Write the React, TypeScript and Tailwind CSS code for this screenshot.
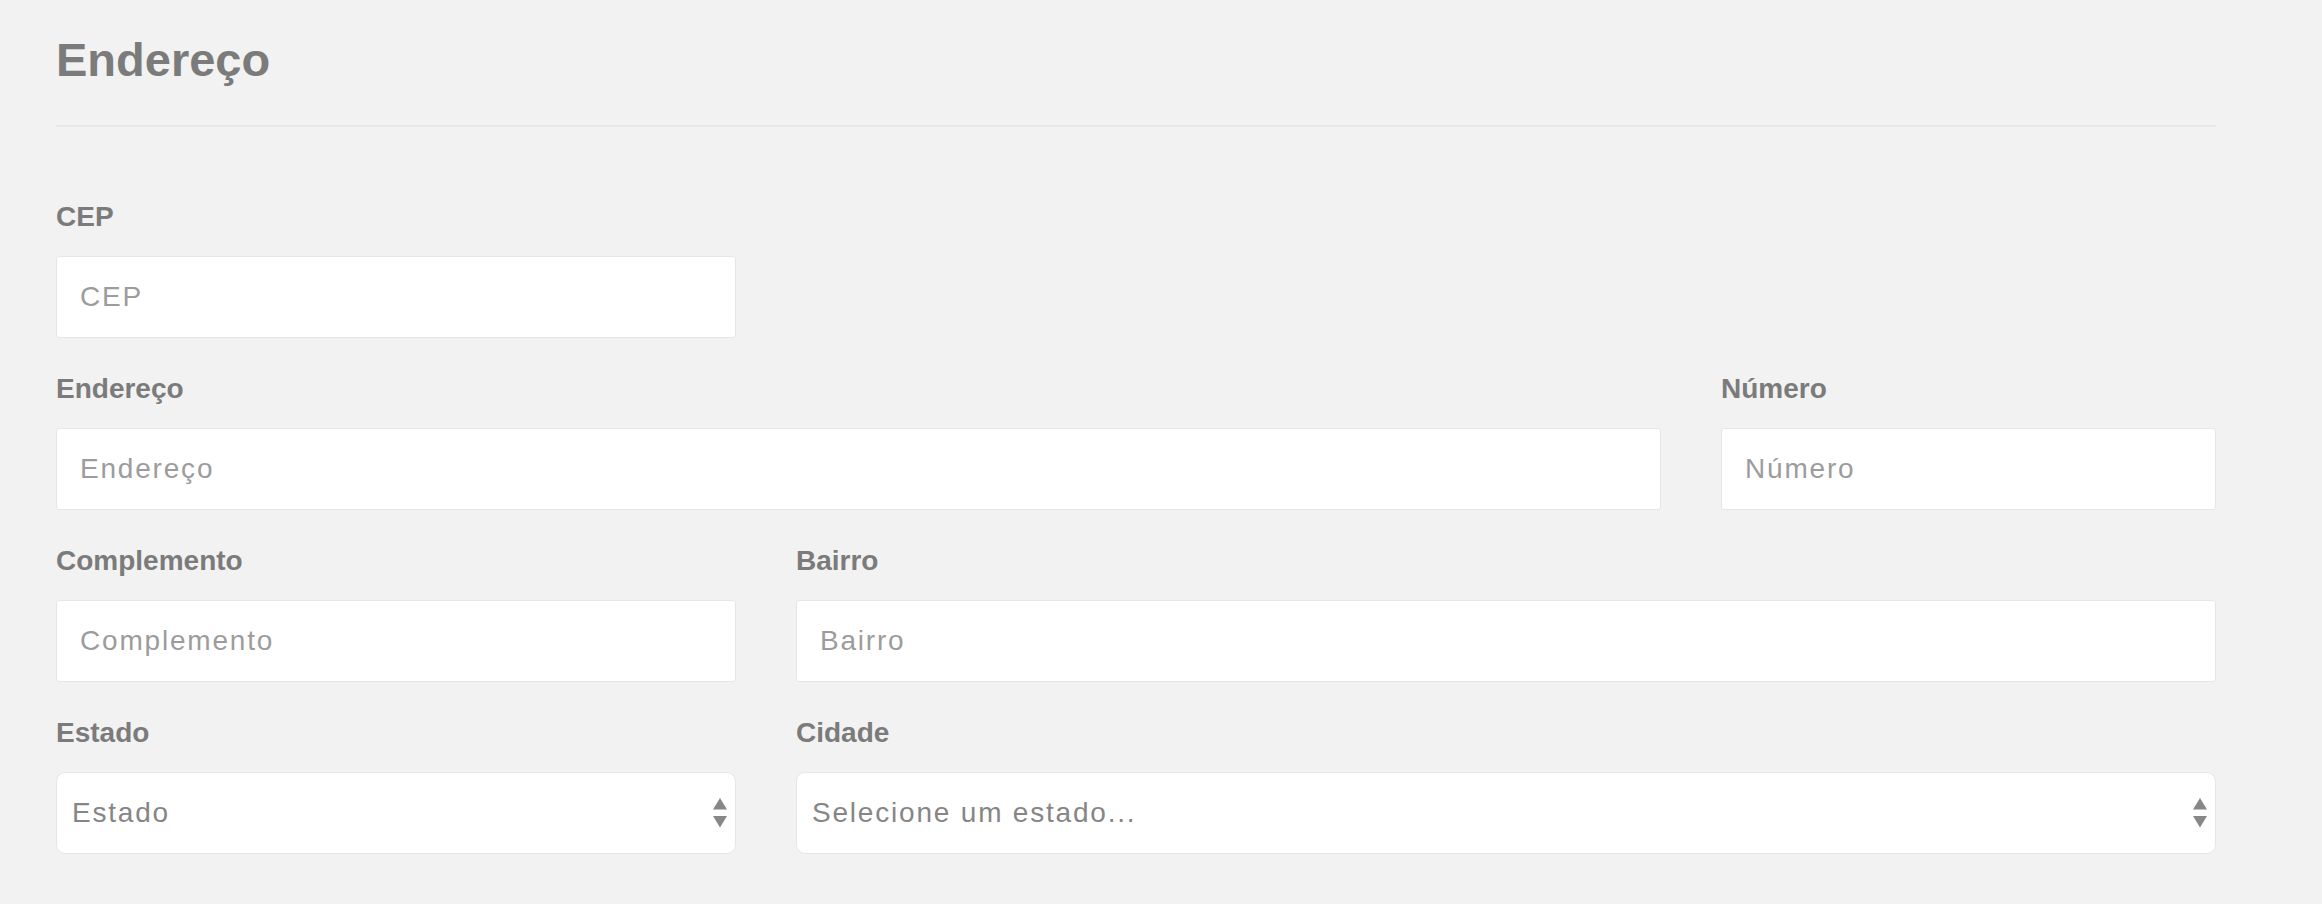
import React from "react";

const FONT = { fontFamily: '"Liberation Sans", Arial, Helvetica, sans-serif' };

function Label({ children }: { children: React.ReactNode }) {
  return (
    <label className="block text-[28px] leading-[32px] font-bold text-[#7b7b7b] mb-[23px]">
      {children}
    </label>
  );
}

function TextField({ label, span }: { label: string; span: string }) {
  return (
    <div className={span}>
      <Label>{label}</Label>
      <input
        type="text"
        placeholder={label}
        className="block w-full h-[82px] bg-white border border-[#e6e6e6] rounded-[3px] pl-[23px] pr-[16px] text-[28px] tracking-[1.8px] text-[#555] placeholder:text-[#9c9c9c] outline-none"
      />
    </div>
  );
}

function Arrows() {
  return (
    <svg width="14" height="30" viewBox="0 0 14 30" className="block">
      <polygon points="7,0 14,11.5 0,11.5" fill="#878787" />
      <polygon points="0,18 14,18 7,29.5" fill="#878787" />
    </svg>
  );
}

function SelectField({ label, value, span }: { label: string; value: string; span: string }) {
  return (
    <div className={span}>
      <Label>{label}</Label>
      <div className="relative">
        <select
          defaultValue=""
          className="block w-full h-[82px] appearance-none bg-white border border-[#e6e6e6] rounded-[9px] pl-[15px] pr-[40px] text-[28px] tracking-[1.8px] text-[#868686] outline-none"
          style={FONT}
        >
          <option value="">{value}</option>
        </select>
        <div className="pointer-events-none absolute right-[9px] top-1/2 -translate-y-1/2">
          <Arrows />
        </div>
      </div>
    </div>
  );
}

export default function App() {
  return (
    <div className="min-h-screen bg-[#f2f2f2]" style={FONT}>
      <div className="pl-[56px] pt-[32px] pb-[40px]">
        <div className="w-[2160px]">
          <h2 className="text-[47px] leading-[56px] font-bold text-[#7b7b7b]">Endereço</h2>
          <div className="mt-[37px] h-[2px] bg-[#e8e8e8]" />
          <div className="mt-[74px] grid grid-cols-12 gap-x-[60px] gap-y-[35px]">
            <TextField label="CEP" span="col-span-4" />
            <div className="col-span-8" />
            <TextField label="Endereço" span="col-span-9" />
            <TextField label="Número" span="col-span-3" />
            <TextField label="Complemento" span="col-span-4" />
            <TextField label="Bairro" span="col-span-8" />
            <SelectField label="Estado" value="Estado" span="col-span-4" />
            <SelectField label="Cidade" value="Selecione um estado..." span="col-span-8" />
          </div>
        </div>
      </div>
    </div>
  );
}
